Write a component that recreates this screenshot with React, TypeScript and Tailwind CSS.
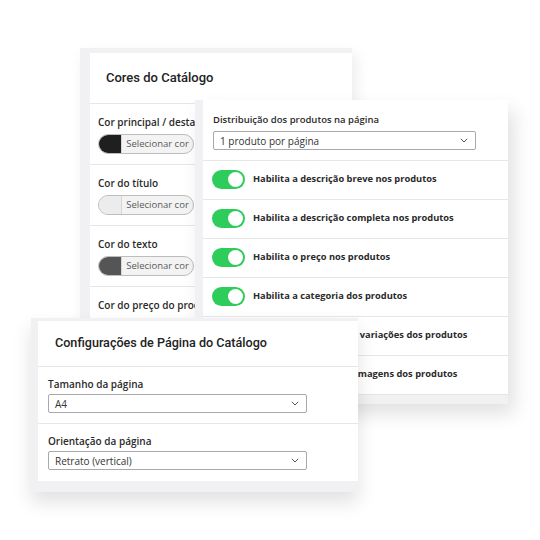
import React from "react";

const Chevron = () => (
  <svg width="8" height="5" viewBox="0 0 8 5" className="shrink-0">
    <polyline points="0.8,0.8 4,4 7.2,0.8" fill="none" stroke="#555" strokeWidth="1" />
  </svg>
);

const Select = ({ value, w }: { value: string; w: string }) => (
  <div
    className={`${w} h-[19px] border border-[#a9a9ad] rounded-[2px] bg-white flex items-center justify-between pl-[6px] pr-[7px] text-[10px] text-[#333] leading-none`}
  >
    <span>{value}</span>
    <Chevron />
  </div>
);

const ColorPill = ({ color }: { color: string }) => (
  <div className="w-[96px] h-[20px] rounded-full border border-[#bdbdbd] overflow-hidden flex bg-[#f3f3f3]">
    <div className="w-[23px] h-full border-r border-[#d6d6d6]" style={{ background: color }} />
    <div className="flex-1 flex items-center justify-center text-[9.5px] text-[#5a5a5a] leading-none">
      Selecionar cor
    </div>
  </div>
);

const ColorRow = ({ label, color }: { label: string; color: string }) => (
  <div className="pl-[8px] pt-[10px] pb-[10px] border-b border-[#e6e6e8]">
    <div className="text-[10px] leading-[16px] font-semibold text-[#2a2a2a] whitespace-nowrap">{label}</div>
    <div className="mt-[4px]">
      <ColorPill color={color} />
    </div>
  </div>
);

const Toggle = () => (
  <div className="w-[33px] h-[19px] rounded-full bg-[#2ecc5b] flex items-center justify-end pr-[2px] shrink-0">
    <div className="w-[15px] h-[15px] rounded-full bg-white" />
  </div>
);

const ToggleRow = ({ label }: { label: string }) => (
  <div className="h-[39px] pb-[2px] border-b border-[#e6e6e8] flex items-center gap-[8px] pl-[9px]">
    <Toggle />
    <span className="text-[9.3px] font-bold text-[#2a2a2a] whitespace-nowrap">{label}</span>
  </div>
);

export default function App() {
  return (
    <div className="relative w-[540px] h-[540px] bg-white overflow-hidden font-['Open_Sans',sans-serif]">
      {/* Card A */}
      <div className="absolute left-[80px] top-[48px] w-[272px] h-[272px] bg-[#f1f1f4] pl-[10px] pt-[5px] shadow-[4px_6px_14px_rgba(0,0,0,0.08)]">
        <div className="bg-white h-full">
          <div className="h-[51px] border-b border-[#e6e6e8] flex items-center pl-[16px]">
            <span className="font-['Roboto',sans-serif] font-medium text-[13px] text-[#222]">Cores do Catálogo</span>
          </div>
          <ColorRow label="Cor principal / destaque" color="#1f1f1f" />
          <ColorRow label="Cor do título" color="#ececec" />
          <ColorRow label="Cor do texto" color="#555555" />
          <div className="pl-[8px] pt-[10px]">
            <div className="text-[10px] leading-[16px] font-semibold text-[#2a2a2a] whitespace-nowrap">Cor do preço do produto</div>
          </div>
        </div>
      </div>

      {/* Card B */}
      <div className="absolute left-[195px] top-[100px] w-[313px] bg-[#f1f1f4] pl-[8px] pb-[9px] shadow-[6px_10px_18px_rgba(0,0,0,0.12)]">
        <div className="bg-white">
          <div className="pl-[10px] pt-[12px] pb-[10px] border-b border-[#e6e6e8]">
            <div className="text-[9.5px] leading-[15px] font-semibold text-[#2a2a2a]">Distribuição dos produtos na página</div>
            <div className="mt-[4px]">
              <Select value="1 produto por página" w="w-[263px]" />
            </div>
          </div>
          <ToggleRow label="Habilita a descrição breve nos produtos" />
          <ToggleRow label="Habilita a descrição completa nos produtos" />
          <ToggleRow label="Habilita o preço nos produtos" />
          <ToggleRow label="Habilita a categoria dos produtos" />
          <ToggleRow label="Habilita a exibição das variações dos produtos" />
          <ToggleRow label="Habilita a exibição de imagens dos produtos" />
        </div>
      </div>

      {/* Card C */}
      <div className="absolute left-[31px] top-[318px] w-[327px] bg-[#f1f1f4] pl-[7px] pt-[3px] pb-[11px] shadow-[0_10px_18px_rgba(0,0,0,0.12)]">
        <div className="bg-white">
          <div className="h-[46px] border-b border-[#e6e6e8] flex items-center pl-[17px]">
            <span className="font-['Roboto',sans-serif] font-medium text-[12.6px] text-[#222]">
              Configurações de Página do Catálogo
            </span>
          </div>
          <div className="pl-[10px] pt-[10px] pb-[10px] border-b border-[#e6e6e8]">
            <div className="text-[10px] leading-[14px] font-semibold text-[#2a2a2a]">Tamanho da página</div>
            <div className="mt-[3px]">
              <Select value="A4" w="w-[259px]" />
            </div>
          </div>
          <div className="pl-[10px] pt-[10px] pb-[11px]">
            <div className="text-[10px] leading-[14px] font-semibold text-[#2a2a2a]">Orientação da página</div>
            <div className="mt-[3px]">
              <Select value="Retrato (vertical)" w="w-[259px]" />
            </div>
          </div>
        </div>
      </div>
    </div>
  );
}
